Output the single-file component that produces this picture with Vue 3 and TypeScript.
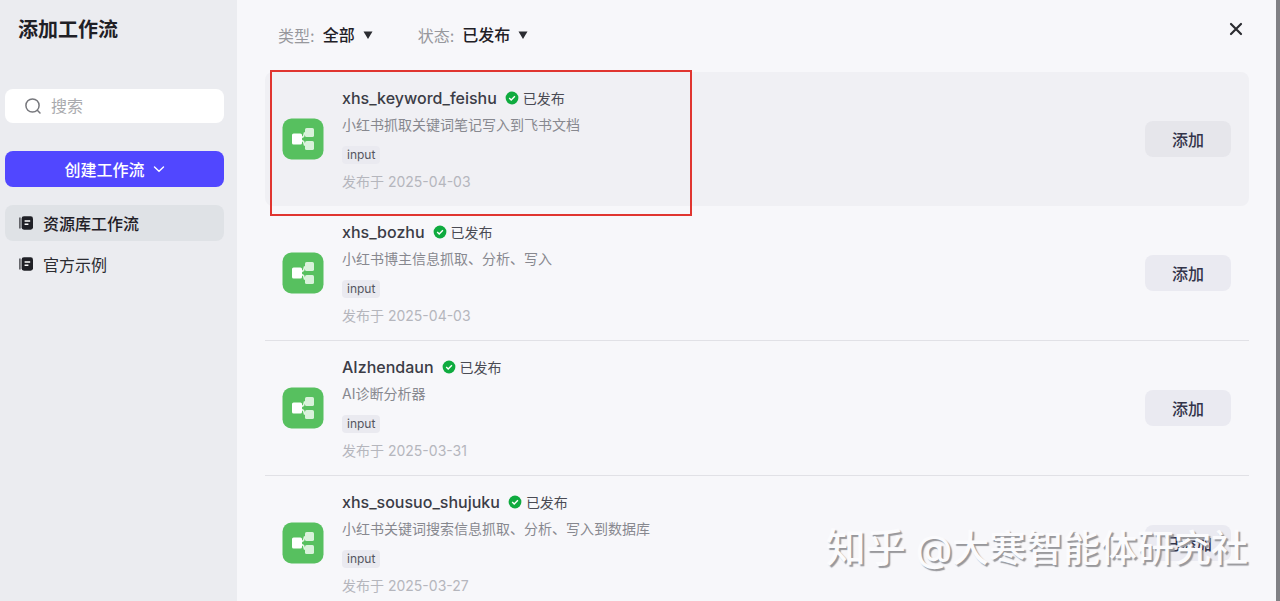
<script setup lang="ts">
import { ref } from 'vue'

interface Workflow {
  name: string
  description: string
  date: string
  added: boolean
}

const keyword = ref('')
const kind = ref('全部')
const status = ref('已发布')

const workflows: Workflow[] = [
  { name: 'xhs_keyword_feishu', description: '小红书抓取关键词笔记写入到飞书文档', date: '2025-04-03', added: false },
  { name: 'xhs_bozhu', description: '小红书博主信息抓取、分析、写入', date: '2025-04-03', added: false },
  { name: 'AIzhendaun', description: 'AI诊断分析器', date: '2025-03-31', added: false },
  { name: 'xhs_sousuo_shujuku', description: '小红书关键词搜索信息抓取、分析、写入到数据库', date: '2025-03-27', added: true },
]

const sections = [
  { label: '资源库工作流', active: true },
  { label: '官方示例', active: false },
]
</script>

<template>
  <div class="dialog">
    <aside class="sidebar">
      <h1 class="title">添加工作流</h1>
      <label class="search">
        <svg width="18" height="18" viewBox="0 0 18 18" aria-hidden="true">
          <circle cx="8.5" cy="8.5" r="6.6" />
          <path d="M13.3 13.3 16 16" />
        </svg>
        <input v-model="keyword" type="text" placeholder="搜索" aria-label="搜索" />
      </label>
      <button class="create" type="button">
        创建工作流
        <svg width="12" height="12" viewBox="0 0 12 12" aria-hidden="true">
          <path d="M1.5 4 6 8.2 10.5 4" />
        </svg>
      </button>
      <nav class="menu">
        <a v-for="s in sections" :key="s.label" href="#" class="menu-item" :class="{ active: s.active }">
          <svg width="14" height="14" viewBox="0 0 14 14" aria-hidden="true">
            <path class="spine" d="M0.9 1.6v10.8" />
            <rect x="2.6" y="0.3" width="11.4" height="13.4" rx="2.4" />
            <path class="lines" d="M5.6 5h5.6M5.6 8.2h3.8" />
          </svg>
          {{ s.label }}
        </a>
      </nav>
    </aside>

    <main class="content">
      <header class="toolbar">
        <label class="filter">
          <span>类型:</span>
          <select v-model="kind">
            <option>全部</option>
          </select>
          <svg width="10" height="8" viewBox="0 0 10 8" aria-hidden="true"><path d="M0.5 0.5h9L5 8z" /></svg>
        </label>
        <label class="filter">
          <span>状态:</span>
          <select v-model="status">
            <option>已发布</option>
          </select>
          <svg width="10" height="8" viewBox="0 0 10 8" aria-hidden="true"><path d="M0.5 0.5h9L5 8z" /></svg>
        </label>
        <button class="close" type="button" aria-label="关闭">
          <svg width="14" height="14" viewBox="0 0 14 14" aria-hidden="true">
            <path d="M2 2l10 10M12 2 2 12" />
          </svg>
        </button>
      </header>

      <ul class="list">
        <li v-for="(w, i) in workflows" :key="w.name" class="row" :class="{ current: i === 0 }">
          <svg class="logo" width="42" height="42" viewBox="0 0 42 42" aria-hidden="true">
            <rect x="0.5" y="0.5" width="41" height="41" rx="9" fill="#57c05f" />
            <path d="M18 20.5 21.5 18.5 22.5 15H25M18 21.5l3.5 2 1 3.5H25" fill="none" stroke="#e4f6e5" stroke-width="1.6" />
            <rect x="23" y="10" width="9" height="9" rx="1.6" fill="#d9f2db" />
            <rect x="23" y="23" width="9" height="9" rx="1.6" fill="#d9f2db" />
            <rect x="10" y="15.5" width="10" height="11" rx="1.6" fill="#fff" />
          </svg>
          <div class="info">
            <div class="heading">
              <h2>{{ w.name }}</h2>
              <svg width="14" height="14" viewBox="0 0 14 14" aria-hidden="true">
                <circle cx="7" cy="7" r="6.4" fill="#0fab3f" />
                <path d="M4.2 7.1 6.2 9l3.7-3.7" fill="none" stroke="#fff" stroke-width="1.4" />
              </svg>
              <span>已发布</span>
            </div>
            <p class="description">{{ w.description }}</p>
            <span class="tag">input</span>
            <p class="date">发布于 {{ w.date }}</p>
          </div>
          <button class="add" type="button">{{ w.added ? '已添加' : '添加' }}</button>
        </li>
      </ul>
    </main>
    <div class="backdrop"></div>
    <div class="highlight"></div>
    <div class="watermark"><span>知乎</span> @大寒智能体研究社</div>
  </div>
</template>

<style>
body {
  margin: 0;
}
</style>

<style scoped>
.dialog {
  position: relative;
  display: flex;
  height: 100vh;
  overflow: hidden;
  background: #f7f7fa;
  color: #1f2026;
  font-family: Inter, "Noto Sans CJK SC", sans-serif;
  font-size: 16px;
}
button,
input,
select {
  font: inherit;
  color: inherit;
  border: 0;
  padding: 0;
  margin: 0;
}
h1,
h2,
p,
ul {
  margin: 0;
  padding: 0;
}
.sidebar {
  box-sizing: border-box;
  flex: 0 0 237px;
  min-width: 0;
  padding: 16px 13px 0 5px;
  background: #ebecf0;
}
.title {
  padding-left: 13px;
  font-size: 20px;
  line-height: 28px;
  font-weight: 600;
}
.search {
  display: flex;
  align-items: center;
  gap: 9px;
  height: 34px;
  margin-top: 45px;
  padding: 0 19px;
  border-radius: 8px;
  background: #fff;
}
.search svg {
  flex: none;
  fill: none;
  stroke: #77787d;
  stroke-width: 1.5;
  stroke-linecap: round;
}
.search input {
  flex: 1;
  width: 100%;
  min-width: 0;
  background: none;
  outline: 0;
}
.search input::placeholder {
  color: #a9aaae;
  opacity: 1;
}
.create {
  display: flex;
  align-items: center;
  justify-content: center;
  gap: 8px;
  width: 100%;
  height: 36px;
  margin-top: 28px;
  border-radius: 8px;
  background: #5147ff;
  color: #fff;
  font-weight: 500;
}
.create svg {
  fill: none;
  stroke: #fff;
  stroke-width: 1.4;
  stroke-linecap: round;
}
.menu {
  display: grid;
  gap: 5px;
  margin-top: 18px;
}
.menu-item {
  display: flex;
  align-items: center;
  gap: 10px;
  height: 36px;
  padding-left: 14px;
  border-radius: 8px;
  color: #2b2c31;
  text-decoration: none;
}
.menu-item.active {
  background: #dfe2e6;
  color: #1f2026;
  font-weight: 500;
}
.menu-item svg {
  fill: #1f2026;
}
.menu-item .spine {
  stroke: #45464b;
  stroke-width: 1.4;
}
.menu-item .lines {
  stroke: #fff;
  stroke-width: 1.4;
}
.content {
  flex: 1;
  min-width: 0;
  padding: 0 27px 0 28px;
}
.toolbar {
  display: flex;
  align-items: center;
  gap: 45px;
  box-sizing: border-box;
  height: 72px;
  padding: 0 6px 2px 13px;
}
.filter {
  display: flex;
  align-items: center;
  gap: 8px;
  color: #97989d;
}
.filter select {
  appearance: none;
  field-sizing: content;
  background: none;
  color: #1f2026;
  font-weight: 500;
}
.filter svg {
  fill: #2b2c31;
}
.close {
  display: flex;
  margin: 0 0 12px auto;
  background: none;
}
.close svg {
  fill: none;
  stroke: #2b2c31;
  stroke-width: 2.2;
  stroke-linecap: round;
}
.list {
  list-style: none;
}
.row {
  display: flex;
  align-items: center;
  gap: 18px;
  height: 134px;
  padding: 0 18px 0 17px;
  border-bottom: 1px solid #e1e1e6;
}
.row.current {
  border-bottom: 0;
  border-radius: 8px;
  background: #f0f0f4;
}
.logo {
  flex: none;
}
.info {
  flex: 1;
  min-width: 0;
  padding-top: 3px;
}
.heading {
  display: flex;
  align-items: center;
  height: 26px;
  font-size: 14px;
  color: #4a4b54;
}
.heading h2 {
  margin-right: 8px;
  font-size: 16px;
  font-weight: 500;
  color: #3b3c46;
}
.heading span {
  margin-left: 4px;
}
.description,
.date {
  font-size: 14px;
  line-height: 28px;
  color: #87888f;
}
.tag {
  display: block;
  width: max-content;
  margin-top: 7px;
  padding: 0 5px;
  border-radius: 4px;
  background: #eaeaf0;
  font-size: 12px;
  line-height: 18px;
  color: #55565f;
}
.date {
  margin-top: 4px;
  color: #b5b6bd;
}
.add {
  flex: none;
  width: 86px;
  height: 36px;
  border-radius: 8px;
  background: #eaeaf1;
  color: #33344a;
  font-weight: 500;
}
.current .add {
  background: #e6e6eb;
}
.backdrop {
  flex: 0 0 4px;
  background: #808084;
}
.highlight {
  position: absolute;
  left: 270px;
  top: 70px;
  box-sizing: border-box;
  width: 422px;
  height: 146px;
  border: 2px solid #e03530;
}
.watermark {
  position: absolute;
  right: 32px;
  bottom: 24px;
  color: #fbfbfd;
  font-size: 37px;
  font-weight: 500;
  line-height: 56px;
  white-space: nowrap;
  text-shadow: 2px 2px 1px #98989c;
}
.watermark span {
  font-size: 40px;
}
</style>
